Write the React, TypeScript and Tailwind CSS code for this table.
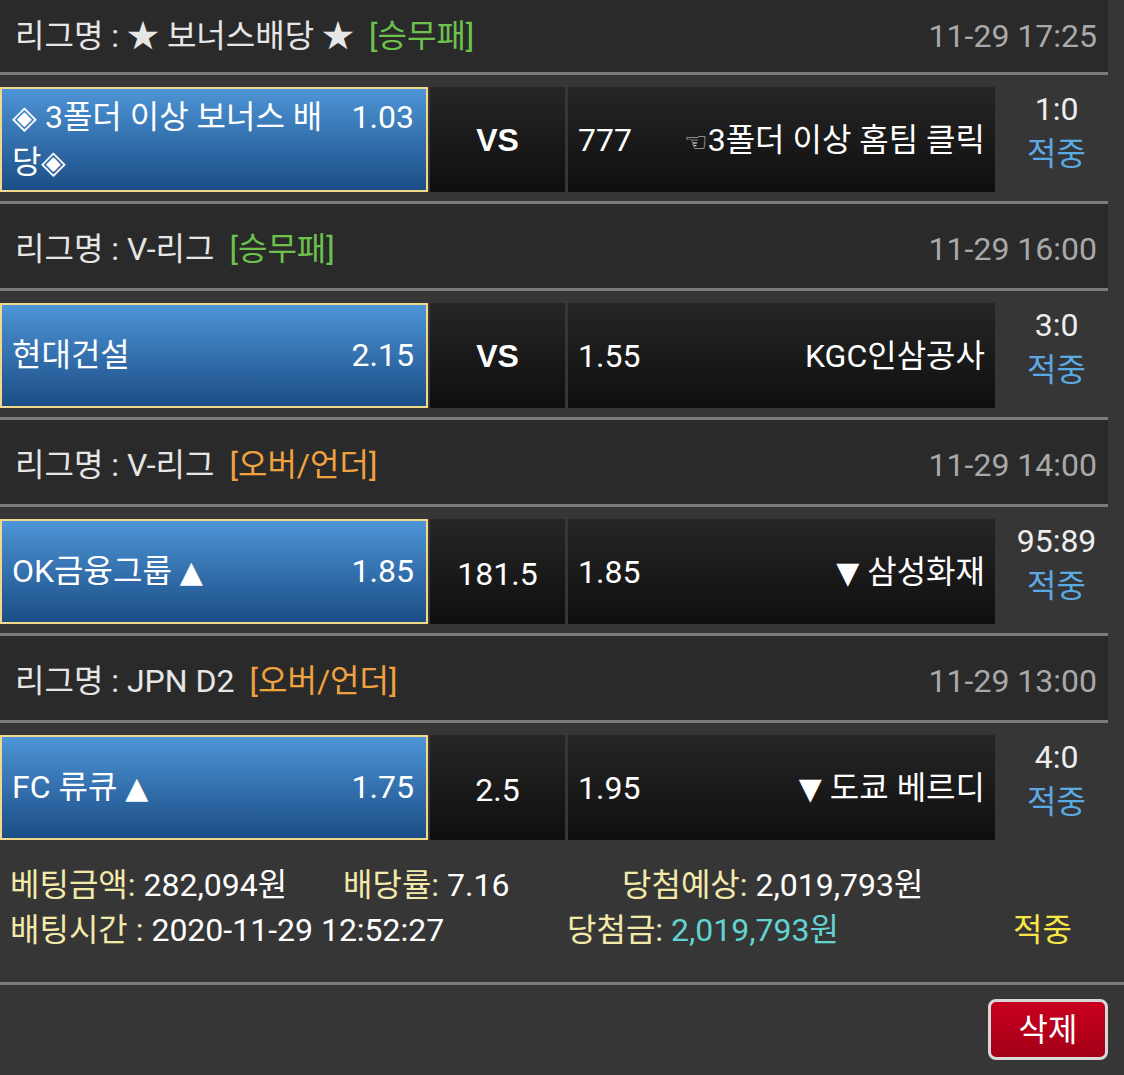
import { Fragment } from "react";

interface Match {
  league: string;
  type: "승무패" | "오버/언더";
  time: string;
  home: string;
  homeArrow?: string;
  homeOdds: string;
  center: string;
  awayOdds: string;
  awayArrow?: string;
  away: React.ReactNode;
  score: string;
}

const matches: Match[] = [
  {
    league: "★ 보너스배당 ★",
    type: "승무패",
    time: "11-29 17:25",
    home: "◈ 3폴더 이상 보너스 배당◈",
    homeOdds: "1.03",
    center: "VS",
    awayOdds: "777",
    away: (
      <>
        <span className="font-['DejaVu_Sans'] text-[26px] text-[#ddd]">☜</span>3폴더 이상 홈팀 클릭
      </>
    ),
    score: "1:0",
  },
  {
    league: "V-리그",
    type: "승무패",
    time: "11-29 16:00",
    home: "현대건설",
    homeOdds: "2.15",
    center: "VS",
    awayOdds: "1.55",
    away: "KGC인삼공사",
    score: "3:0",
  },
  {
    league: "V-리그",
    type: "오버/언더",
    time: "11-29 14:00",
    home: "OK금융그룹",
    homeArrow: "▲",
    homeOdds: "1.85",
    center: "181.5",
    awayOdds: "1.85",
    awayArrow: "▼",
    away: "삼성화재",
    score: "95:89",
  },
  {
    league: "JPN D2",
    type: "오버/언더",
    time: "11-29 13:00",
    home: "FC 류큐",
    homeArrow: "▲",
    homeOdds: "1.75",
    center: "2.5",
    awayOdds: "1.95",
    awayArrow: "▼",
    away: "도쿄 베르디",
    score: "4:0",
  },
];

const Arrow = ({ glyph }: { glyph: string }) => (
  <span className="font-['DejaVu_Sans'] text-[30px]">{glyph}</span>
);

const Separator = () => <div className="h-[3px] bg-[#7b7b7b]" />;

const LeagueHeader = ({ match, first }: { match: Match; first: boolean }) => (
  <div
    className={`flex items-center justify-between bg-[#2a2a2a] pl-[15px] pr-[11px] ${
      first ? "h-[72px]" : "h-[84px] pt-[5px]"
    }`}
  >
    <div className="flex items-center text-[#e6e6e6]">
      <span>리그명 : {match.league}</span>
      <span
        className={`ml-[15px] ${match.type === "승무패" ? "text-[#6dc24e]" : "text-[#f0a23e]"}`}
      >
        [{match.type}]
      </span>
    </div>
    <span className="text-[#a9a9a9]">{match.time}</span>
  </div>
);

const MatchRow = ({ match }: { match: Match }) => (
  <div className="flex h-[126px] pt-[12px] pb-[9px]">
    <div className="flex w-[428px] items-center border-2 border-[#f1d88a] bg-gradient-to-b from-[#4d95d7] to-[#1c4e86] pl-[10px] pr-[12px] text-white">
      <div className="flex w-full items-start justify-between gap-[24px] leading-[45px]">
        <span className="min-w-0 flex-1">
          {match.home}
          {match.homeArrow && (
            <>
              {" "}
              <Arrow glyph={match.homeArrow} />
            </>
          )}
        </span>
        <span>{match.homeOdds}</span>
      </div>
    </div>
    <div
      className={`ml-[2px] flex w-[135px] items-center justify-center bg-gradient-to-b from-[#262626] to-[#0f0f0f] text-white ${
        match.center === "VS" ? "font-['Liberation_Sans'] font-bold" : "pt-[4px]"
      }`}
    >
      {match.center}
    </div>
    <div className="ml-[3px] flex w-[427px] items-center justify-between bg-gradient-to-b from-[#262626] to-[#0f0f0f] px-[10px] text-white">
      <span>{match.awayOdds}</span>
      <span>
        {match.awayArrow && (
          <>
            <Arrow glyph={match.awayArrow} />{" "}
          </>
        )}
        {match.away}
      </span>
    </div>
    <div className="flex flex-1 flex-col items-center justify-center pb-[16px] pl-[10px] leading-[45px]">
      <span className="text-[#eeeeee]">{match.score}</span>
      <span className="text-[#5ba8e2]">적중</span>
    </div>
  </div>
);

export default function App() {
  return (
    <div className="min-h-[1075px] w-[1124px] bg-[#363636] font-['Roboto','Noto_Sans_CJK_KR',sans-serif] text-[32px]">
      <div className="w-[1108px]">
        {matches.map((match, i) => (
          <Fragment key={i}>
            <LeagueHeader match={match} first={i === 0} />
            <Separator />
            <MatchRow match={match} />
            {i < matches.length - 1 && <Separator />}
          </Fragment>
        ))}
      </div>

      <div className="pt-[14px] pb-[29px] leading-[45px]">
        <div className="flex pl-[10px]">
          <div className="w-[333px]">
            <span className="text-[#f3eaaa]">베팅금액:</span>{" "}
            <span className="text-white">282,094원</span>
          </div>
          <div className="w-[279px]">
            <span className="text-[#f3eaaa]">배당률:</span> <span className="text-white">7.16</span>
          </div>
          <div>
            <span className="text-[#f3eaaa]">당첨예상:</span>{" "}
            <span className="text-white">2,019,793원</span>
          </div>
        </div>
        <div className="flex pl-[10px]">
          <div className="w-[557px]">
            <span className="text-[#f3eaaa]">배팅시간 :</span>{" "}
            <span className="text-white">2020-11-29 12:52:27</span>
          </div>
          <div className="w-[446px]">
            <span className="text-[#f3eaaa]">당첨금:</span>{" "}
            <span className="text-[#63d3d1]">2,019,793원</span>
          </div>
          <span className="text-[#f8e548]">적중</span>
        </div>
      </div>

      <div className="h-[3px] bg-[#7b7b7b]" />

      <div className="flex justify-end pt-[14px] pr-[16px]">
        <button className="flex h-[61px] w-[120px] items-center justify-center rounded-[8px] border-[3px] border-[#d8d8d8] bg-gradient-to-b from-[#c9001f] to-[#a30017] text-white">
          삭제
        </button>
      </div>
    </div>
  );
}
